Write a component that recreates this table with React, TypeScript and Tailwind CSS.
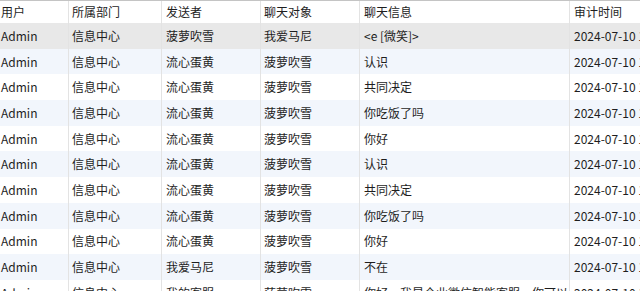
import React from "react";

type Row = [string, string, string, string, string, string];

const rows: Row[] = [
  ["Admin", "信息中心", "菠萝吹雪", "我爱马尼", "<e [微笑]>", "2024-07-10 14:21:05"],
  ["Admin", "信息中心", "流心蛋黄", "菠萝吹雪", "认识", "2024-07-10 14:20:51"],
  ["Admin", "信息中心", "流心蛋黄", "菠萝吹雪", "共同决定", "2024-07-10 14:20:44"],
  ["Admin", "信息中心", "流心蛋黄", "菠萝吹雪", "你吃饭了吗", "2024-07-10 14:20:39"],
  ["Admin", "信息中心", "流心蛋黄", "菠萝吹雪", "你好", "2024-07-10 14:20:33"],
  ["Admin", "信息中心", "流心蛋黄", "菠萝吹雪", "认识", "2024-07-10 14:18:02"],
  ["Admin", "信息中心", "流心蛋黄", "菠萝吹雪", "共同决定", "2024-07-10 14:17:55"],
  ["Admin", "信息中心", "流心蛋黄", "菠萝吹雪", "你吃饭了吗", "2024-07-10 14:17:48"],
  ["Admin", "信息中心", "流心蛋黄", "菠萝吹雪", "你好", "2024-07-10 14:17:40"],
  ["Admin", "信息中心", "我爱马尼", "菠萝吹雪", "不在", "2024-07-10 14:16:12"],
  ["Admin", "信息中心", "我的客服", "菠萝吹雪", "你好，我是企业微信智能客服，你可以先", "2024-07-10 14:15:30"],
];

const headers: Row = ["用户", "所属部门", "发送者", "聊天对象", "聊天信息", "审计时间"];

const cellCls = [
  "w-[69px] pl-[1px] border-r border-[#e3e3e3]",
  "w-[93px] pl-[3px] border-r border-[#e3e3e3]",
  "w-[99px] pl-[4px] border-r border-[#e3e3e3]",
  "w-[99px] pl-[3px] border-r border-[#e3e3e3]",
  "w-[210px] pl-[4px] border-r border-[#e3e3e3]",
  "flex-1 pl-[4px]",
];

export default function App() {
  return (
    <div
      className="w-[640px] h-[291px] overflow-hidden bg-white text-[12px] text-[#1e1e1e]"
      style={{ fontFamily: '"Noto Sans CJK SC", "Noto Sans", sans-serif' }}
    >
      <div className="flex h-[23px] border-t border-[#c4c4c4] bg-white">
        {headers.map((h, i) => (
          <div
            key={i}
            className={`${cellCls[i]} shrink-0 flex items-center whitespace-nowrap overflow-hidden`}
          >
            {h}
          </div>
        ))}
      </div>
      {rows.map((r, ri) => (
        <div
          key={ri}
          className={`flex h-[25.7px] ${
            ri === 0 ? "bg-[#e8e8e8]" : ri % 2 === 1 ? "bg-[#f2f6fc]" : "bg-white"
          }`}
        >
          {r.map((c, ci) => (
            <div
              key={ci}
              className={`${cellCls[ci]} shrink-0 flex items-center whitespace-nowrap overflow-hidden`}
            >
              {c}
            </div>
          ))}
        </div>
      ))}
    </div>
  );
}
